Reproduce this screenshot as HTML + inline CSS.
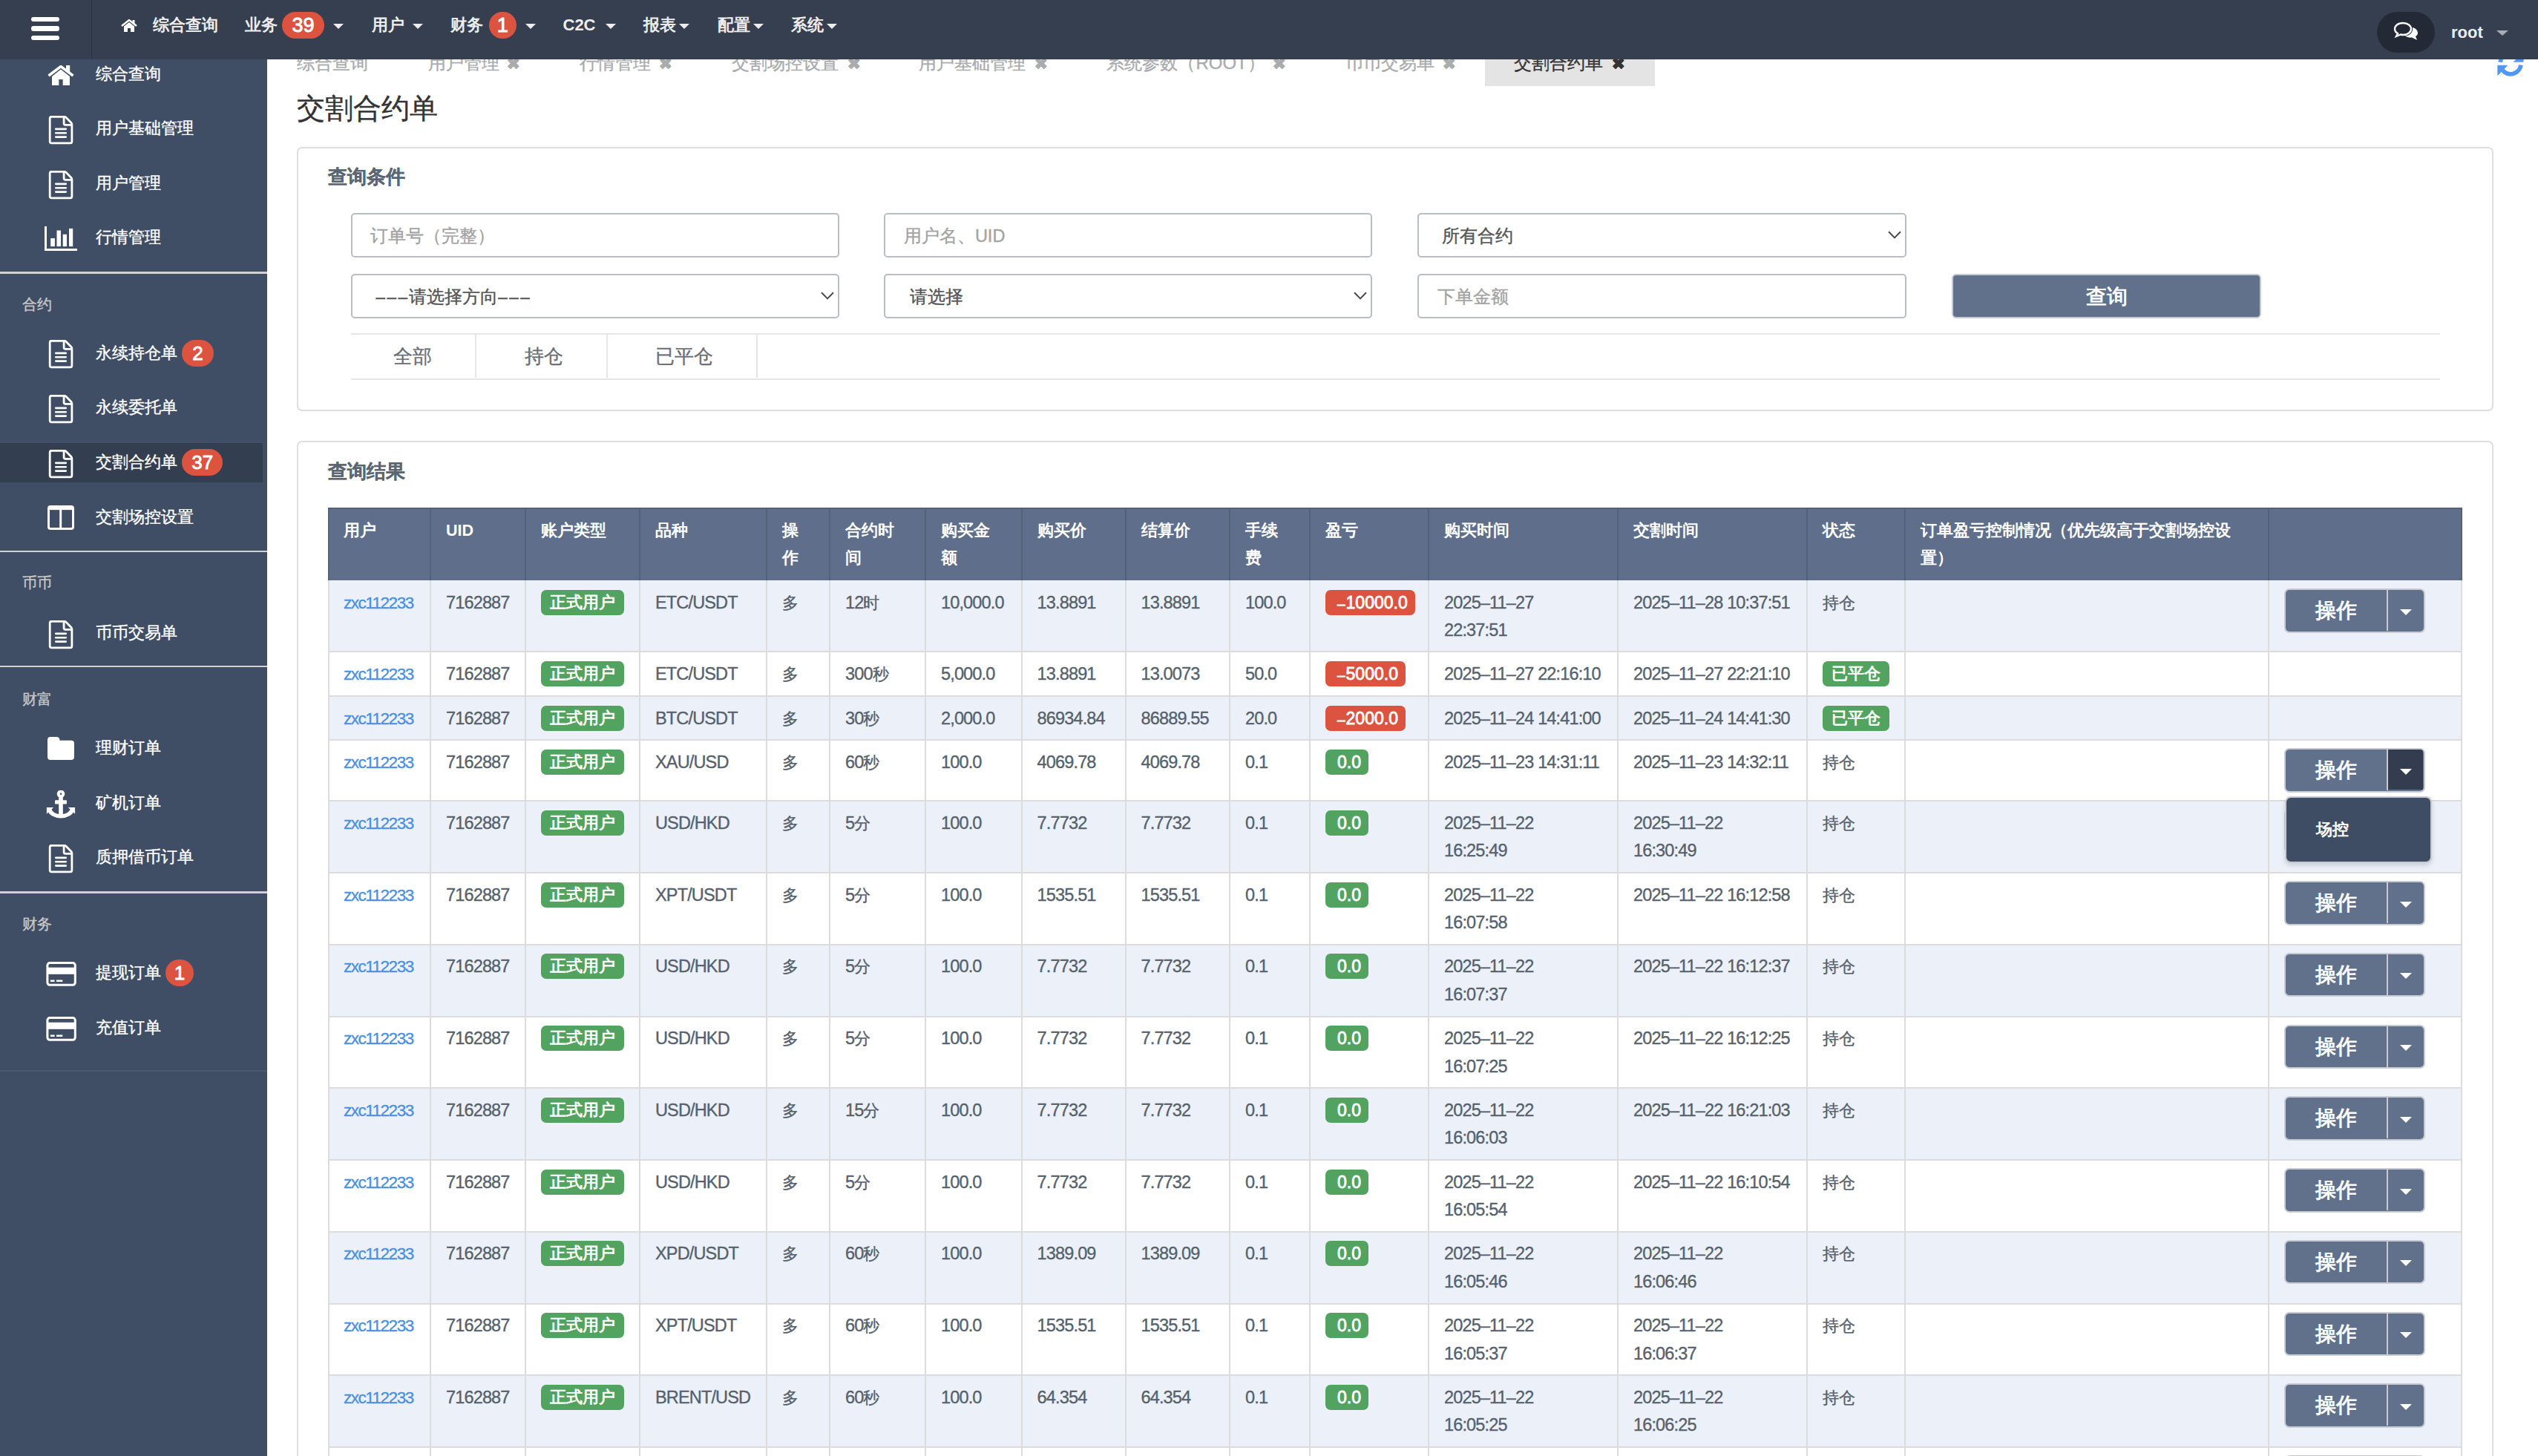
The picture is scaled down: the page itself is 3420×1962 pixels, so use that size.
<!DOCTYPE html><html><head><meta charset="utf-8"><title>交割合约单</title><style>
@media (max-width:2400px){html{zoom:0.5}}
*{box-sizing:border-box;margin:0;padding:0}
html,body{width:3420px;height:1962px;overflow:hidden;background:#fff;font-family:"Liberation Sans",sans-serif;color:#555;-webkit-text-stroke:0.35px currentColor}
div,span,i{position:absolute}
.t{white-space:nowrap}
#top{left:0;top:0;width:3420px;height:80px;background:#353f50;z-index:10}
#side{left:0;top:80px;width:360px;height:1882px;background:#3f4e65;z-index:5}
.bar{left:42px;width:38px;height:6.5px;border-radius:3.25px;background:#fff}
.nav{font-size:22px;font-weight:bold;color:#ededed;white-space:nowrap;line-height:30px;-webkit-text-stroke:0}
.car{width:0;height:0;border-left:7.75px solid transparent;border-right:7.75px solid transparent;border-top:7.5px solid #ededed}
.nb{height:35.5px;border-radius:17.75px;background:#dc5340;color:#fff;font-weight:normal;-webkit-text-stroke:0.9px #fff;font-size:27px;line-height:36px;text-align:center}
.si{font-size:22px;color:#fff;white-space:nowrap;line-height:30px}
.sl{font-size:20px;color:#c8c8c8;white-space:nowrap;line-height:30px}
.sdiv{left:0;width:360px;height:2.5px;background:#d5d0ce}
.sb{height:36px;border-radius:18px;background:#dc5340;color:#fff;font-weight:normal;-webkit-text-stroke:0.9px #fff;font-size:26px;line-height:36px;text-align:center}
.tab{font-size:24px;color:#a9abad;white-space:nowrap;line-height:30px}
.box{border:2px solid #dedede;border-radius:7px;background:#fff}
.inp{height:59.5px;border:2px solid #b9bdc4;border-radius:5px;background:#fff;font-size:23.5px;white-space:nowrap}
.inp span{top:1.5px;line-height:55.5px}
.ph{color:#a3a3a3}
.chev{width:10px;height:10px;border-right:2.5px solid #444;border-bottom:2.5px solid #444;transform:rotate(45deg)}
.ft{font-size:26px;color:#6b6e74;white-space:nowrap;line-height:30px}
.cell{white-space:nowrap;font-size:23.5px;letter-spacing:-0.85px;line-height:37.5px;color:#56616c}
em{font-style:normal;font-size:21.5px;letter-spacing:0}
.hd{white-space:nowrap;font-size:21.5px;line-height:36.5px;color:#fff;font-weight:bold;-webkit-text-stroke:0}
.lnk{color:#4a90e2;letter-spacing:-1.5px;font-size:22.5px}
.bg{-webkit-text-stroke:0.8px #fff;height:34px;border-radius:7px;background:#52a35f;color:#fff;font-weight:normal;font-size:23px;line-height:34px;text-align:center;white-space:nowrap}
.br{background:#dc5340}
small.dsh{font-size:19px;margin-right:1px}
b.dd{font-weight:normal;font-size:22.5px;letter-spacing:2.4px}
.btn{width:190px;height:59.5px;border:2.5px solid #c7cbd1;border-radius:7px;background:#62718b;overflow:hidden}
.btn .m{left:0;top:0;width:136px;height:55px;color:#fff;font-size:28px;line-height:55px;text-align:center;-webkit-text-stroke:0.9px #fff}
.btn .s{left:136px;top:0;width:2px;height:55px;background:#c7cbd1}
.btn .tg{left:138px;top:0;width:47px;height:54px}
.btn .tg i{left:15.5px;top:25.5px;width:0;height:0;border-left:8px solid transparent;border-right:8px solid transparent;border-top:8.5px solid #fff}
</style></head><body>
<div style="left:2000.7px;top:40px;width:229.5px;height:75.5px;background:#e4e4e4"></div>
<div class="tab" style="left:400px;top:70px">综合查询</div>
<div class="tab" style="left:576.5px;top:70px">用户管理</div>
<div class="tab" style="left:683px;top:71px;font-weight:bold;font-size:21px">✖</div>
<div class="tab" style="left:780.7px;top:70px">行情管理</div>
<div class="tab" style="left:888px;top:71px;font-weight:bold;font-size:21px">✖</div>
<div class="tab" style="left:986px;top:70px">交割场控设置</div>
<div class="tab" style="left:1141.6px;top:71px;font-weight:bold;font-size:21px">✖</div>
<div class="tab" style="left:1237.5px;top:70px">用户基础管理</div>
<div class="tab" style="left:1394px;top:71px;font-weight:bold;font-size:21px">✖</div>
<div class="tab" style="left:1491.4px;top:70px">系统参数（ROOT）</div>
<div class="tab" style="left:1714.7px;top:71px;font-weight:bold;font-size:21px">✖</div>
<div class="tab" style="left:1813px;top:70px">币币交易单</div>
<div class="tab" style="left:1944px;top:71px;font-weight:bold;font-size:21px">✖</div>
<div class="tab" style="left:2040px;top:70px;color:#333">交割合约单</div>
<div class="tab" style="left:2172px;top:71px;color:#333;font-weight:bold;font-size:21px">✖</div>
<svg style="position:absolute;left:3340px;top:60px" width="80" height="60" viewBox="0 0 80 60"><path d="M56.9 27.65 A14 14 0 0 1 32.28 34.7" fill="none" stroke="#5196f4" stroke-width="5.8"/><path d="M25.8 28.2 H38.6 L25.8 41.2 Z" fill="#5196f4" stroke="#5196f4" stroke-width="0.8" stroke-linejoin="round"/><path d="M29.14 23.75 A14 14 0 0 1 53.72 16.7" fill="none" stroke="#5196f4" stroke-width="5.8"/><path d="M60.2 23.2 H47.4 L60.2 10.2 Z" fill="#5196f4" stroke="#5196f4" stroke-width="0.8" stroke-linejoin="round"/></svg>
<div class="t" style="left:400px;top:119px;font-size:38px;color:#333;line-height:54px">交割合约单</div>
<div class="box" style="left:400px;top:198px;width:2960px;height:356px"></div>
<div class="t" style="left:442px;top:223px;font-size:26px;font-weight:bold;color:#5b6670;line-height:30px;-webkit-text-stroke:0.2px #5b6670">查询条件</div>
<div class="inp" style="left:472.6px;top:287px;width:658px"><span class="ph" style="left:24.5px;color:#a3a3a3">订单号（完整）</span></div>
<div class="inp" style="left:1191.4px;top:287px;width:658px"><span class="ph" style="left:24.5px;color:#a3a3a3">用户名、UID</span></div>
<div class="inp" style="left:1910px;top:287px;width:659px"><span class="" style="left:30.6px;color:#555">所有合约</span><svg style="position:absolute;left:632px;top:22px" width="18" height="11" viewBox="0 0 18 11"><path d="M1 1.2 L9 9.4 L17 1.2" fill="none" stroke="#4a4a4a" stroke-width="2"/></svg></div>
<div class="inp" style="left:472.6px;top:369px;width:658px"><span class="" style="left:32px;color:#555"><b class="dd">–––</b>请选择方向<b class="dd">–––</b></span><svg style="position:absolute;left:631px;top:22px" width="18" height="11" viewBox="0 0 18 11"><path d="M1 1.2 L9 9.4 L17 1.2" fill="none" stroke="#4a4a4a" stroke-width="2"/></svg></div>
<div class="inp" style="left:1191.4px;top:369px;width:658px"><span class="" style="left:32.6px;color:#555">请选择</span><svg style="position:absolute;left:631px;top:22px" width="18" height="11" viewBox="0 0 18 11"><path d="M1 1.2 L9 9.4 L17 1.2" fill="none" stroke="#4a4a4a" stroke-width="2"/></svg></div>
<div class="inp" style="left:1910px;top:369px;width:659px"><span class="ph" style="left:25px;color:#a3a3a3">下单金额</span></div>
<div style="left:2630px;top:369px;width:417px;height:59.5px;background:#62718b;border:2px solid #c7cbd1;border-radius:6px;color:#fff;font-size:28px;line-height:57px;text-align:center;-webkit-text-stroke:0.8px #fff">查询</div>
<div style="left:472.6px;top:449px;width:2815.4px;height:2px;background:#e6e6e6"></div>
<div style="left:472.6px;top:509.5px;width:2815.4px;height:2px;background:#e6e6e6"></div>
<div style="left:640px;top:450px;width:2px;height:59px;background:#e6e6e6"></div>
<div style="left:817px;top:450px;width:2px;height:59px;background:#e6e6e6"></div>
<div style="left:1018.7px;top:450px;width:2px;height:59px;background:#e6e6e6"></div>
<div class="ft" style="left:530.0px;top:465px;width:52px">全部</div>
<div class="ft" style="left:707.0px;top:465px;width:52px">持仓</div>
<div class="ft" style="left:882.7px;top:465px;width:78px">已平仓</div>
<div class="box" style="left:400px;top:594px;width:2960px;height:1500px"></div>
<div class="t" style="left:442px;top:620px;font-size:26px;font-weight:bold;color:#5b6670;line-height:30px;-webkit-text-stroke:0.2px #5b6670">查询结果</div>
<div style="left:443px;top:685px;width:2874px;height:97px;background:#5f6f8b"></div>
<div style="left:443px;top:782px;width:2874px;height:96px;background:#ecf1f9"></div>
<div style="left:443px;top:878px;width:2874px;height:60px;background:#ffffff"></div>
<div style="left:443px;top:938px;width:2874px;height:59px;background:#ecf1f9"></div>
<div style="left:443px;top:997px;width:2874px;height:82px;background:#ffffff"></div>
<div style="left:443px;top:1079px;width:2874px;height:97px;background:#ecf1f9"></div>
<div style="left:443px;top:1176px;width:2874px;height:96.75px;background:#ffffff"></div>
<div style="left:443px;top:1272.75px;width:2874px;height:96.75px;background:#ecf1f9"></div>
<div style="left:443px;top:1369.5px;width:2874px;height:96.75px;background:#ffffff"></div>
<div style="left:443px;top:1466.25px;width:2874px;height:96.75px;background:#ecf1f9"></div>
<div style="left:443px;top:1563px;width:2874px;height:96.75px;background:#ffffff"></div>
<div style="left:443px;top:1659.75px;width:2874px;height:96.75px;background:#ecf1f9"></div>
<div style="left:443px;top:1756.5px;width:2874px;height:96.75px;background:#ffffff"></div>
<div style="left:443px;top:1853.25px;width:2874px;height:96.75px;background:#ecf1f9"></div>
<div style="left:443px;top:1950px;width:2874px;height:96.75px;background:#ffffff"></div>
<div style="left:442px;top:685px;width:2px;height:97px;background:#53627b"></div>
<div style="left:442px;top:782px;width:2px;height:1263px;background:#dcdcdc"></div>
<div style="left:579px;top:685px;width:2px;height:97px;background:#53627b"></div>
<div style="left:579px;top:782px;width:2px;height:1263px;background:#dcdcdc"></div>
<div style="left:707px;top:685px;width:2px;height:97px;background:#53627b"></div>
<div style="left:707px;top:782px;width:2px;height:1263px;background:#dcdcdc"></div>
<div style="left:861px;top:685px;width:2px;height:97px;background:#53627b"></div>
<div style="left:861px;top:782px;width:2px;height:1263px;background:#dcdcdc"></div>
<div style="left:1032px;top:685px;width:2px;height:97px;background:#53627b"></div>
<div style="left:1032px;top:782px;width:2px;height:1263px;background:#dcdcdc"></div>
<div style="left:1117px;top:685px;width:2px;height:97px;background:#53627b"></div>
<div style="left:1117px;top:782px;width:2px;height:1263px;background:#dcdcdc"></div>
<div style="left:1246px;top:685px;width:2px;height:97px;background:#53627b"></div>
<div style="left:1246px;top:782px;width:2px;height:1263px;background:#dcdcdc"></div>
<div style="left:1375.6px;top:685px;width:2px;height:97px;background:#53627b"></div>
<div style="left:1375.6px;top:782px;width:2px;height:1263px;background:#dcdcdc"></div>
<div style="left:1515.5px;top:685px;width:2px;height:97px;background:#53627b"></div>
<div style="left:1515.5px;top:782px;width:2px;height:1263px;background:#dcdcdc"></div>
<div style="left:1656px;top:685px;width:2px;height:97px;background:#53627b"></div>
<div style="left:1656px;top:782px;width:2px;height:1263px;background:#dcdcdc"></div>
<div style="left:1764px;top:685px;width:2px;height:97px;background:#53627b"></div>
<div style="left:1764px;top:782px;width:2px;height:1263px;background:#dcdcdc"></div>
<div style="left:1924px;top:685px;width:2px;height:97px;background:#53627b"></div>
<div style="left:1924px;top:782px;width:2px;height:1263px;background:#dcdcdc"></div>
<div style="left:2179px;top:685px;width:2px;height:97px;background:#53627b"></div>
<div style="left:2179px;top:782px;width:2px;height:1263px;background:#dcdcdc"></div>
<div style="left:2434px;top:685px;width:2px;height:97px;background:#53627b"></div>
<div style="left:2434px;top:782px;width:2px;height:1263px;background:#dcdcdc"></div>
<div style="left:2566px;top:685px;width:2px;height:97px;background:#53627b"></div>
<div style="left:2566px;top:782px;width:2px;height:1263px;background:#dcdcdc"></div>
<div style="left:3056px;top:685px;width:2px;height:97px;background:#53627b"></div>
<div style="left:3056px;top:782px;width:2px;height:1263px;background:#dcdcdc"></div>
<div style="left:3316px;top:685px;width:2px;height:97px;background:#53627b"></div>
<div style="left:3316px;top:782px;width:2px;height:1263px;background:#dcdcdc"></div>
<div style="left:442px;top:684px;width:2876px;height:2px;background:#53627b"></div>
<div style="left:442px;top:877px;width:2876px;height:2px;background:#dcdcdc"></div>
<div style="left:442px;top:937px;width:2876px;height:2px;background:#dcdcdc"></div>
<div style="left:442px;top:996px;width:2876px;height:2px;background:#dcdcdc"></div>
<div style="left:442px;top:1078px;width:2876px;height:2px;background:#dcdcdc"></div>
<div style="left:442px;top:1175px;width:2876px;height:2px;background:#dcdcdc"></div>
<div style="left:442px;top:1271.75px;width:2876px;height:2px;background:#dcdcdc"></div>
<div style="left:442px;top:1368.5px;width:2876px;height:2px;background:#dcdcdc"></div>
<div style="left:442px;top:1465.25px;width:2876px;height:2px;background:#dcdcdc"></div>
<div style="left:442px;top:1562px;width:2876px;height:2px;background:#dcdcdc"></div>
<div style="left:442px;top:1658.75px;width:2876px;height:2px;background:#dcdcdc"></div>
<div style="left:442px;top:1755.5px;width:2876px;height:2px;background:#dcdcdc"></div>
<div style="left:442px;top:1852.25px;width:2876px;height:2px;background:#dcdcdc"></div>
<div style="left:442px;top:1949px;width:2876px;height:2px;background:#dcdcdc"></div>
<div style="left:442px;top:2045.75px;width:2876px;height:2px;background:#dcdcdc"></div>
<div class="hd" style="left:463px;top:697px">用户</div>
<div class="hd" style="left:601px;top:697px">UID</div>
<div class="hd" style="left:729px;top:697px">账户类型</div>
<div class="hd" style="left:883px;top:697px">品种</div>
<div class="hd" style="left:1054px;top:697px">操<br>作</div>
<div class="hd" style="left:1139px;top:697px">合约时<br>间</div>
<div class="hd" style="left:1268px;top:697px">购买金<br>额</div>
<div class="hd" style="left:1397.6px;top:697px">购买价</div>
<div class="hd" style="left:1537.5px;top:697px">结算价</div>
<div class="hd" style="left:1678px;top:697px">手续<br>费</div>
<div class="hd" style="left:1786px;top:697px">盈亏</div>
<div class="hd" style="left:1946px;top:697px">购买时间</div>
<div class="hd" style="left:2201px;top:697px">交割时间</div>
<div class="hd" style="left:2456px;top:697px">状态</div>
<div class="hd" style="left:2588px;top:697px">订单盈亏控制情况（优先级高于交割场控设<br>置）</div>
<div class="hd" style="left:3078px;top:697px"></div>
<div class="cell lnk" style="left:463px;top:793.5px">zxc112233</div>
<div class="cell" style="left:601px;top:793.5px">7162887</div>
<div class="bg" style="left:729px;top:794.5px;padding:0 12px;font-size:21.7px">正式用户</div>
<div class="cell" style="left:883px;top:793.5px">ETC/USDT</div>
<div class="cell" style="left:1054px;top:793.5px"><em>多</em></div>
<div class="cell" style="left:1139px;top:793.5px">12<em>时</em></div>
<div class="cell" style="left:1268px;top:793.5px">10,000.0</div>
<div class="cell" style="left:1397.6px;top:793.5px">13.8891</div>
<div class="cell" style="left:1537.5px;top:793.5px">13.8891</div>
<div class="cell" style="left:1678px;top:793.5px">100.0</div>
<div class="bg br" style="left:1786px;top:794.5px;padding:0 10px 0 16px;letter-spacing:0"><small class="dsh">–</small>10000.0</div>
<div class="cell" style="left:1946px;top:793.5px">2025–11–27<br>22:37:51</div>
<div class="cell" style="left:2201px;top:793.5px">2025–11–28 10:37:51</div>
<div class="cell" style="left:2456px;top:793.5px"><em>持仓</em></div>
<div class="btn" style="left:3078px;top:793px"><div class="m">操作</div><div class="s"></div><div class="tg"><i></i></div></div>
<div class="cell lnk" style="left:463px;top:889.5px">zxc112233</div>
<div class="cell" style="left:601px;top:889.5px">7162887</div>
<div class="bg" style="left:729px;top:890.5px;padding:0 12px;font-size:21.7px">正式用户</div>
<div class="cell" style="left:883px;top:889.5px">ETC/USDT</div>
<div class="cell" style="left:1054px;top:889.5px"><em>多</em></div>
<div class="cell" style="left:1139px;top:889.5px">300<em>秒</em></div>
<div class="cell" style="left:1268px;top:889.5px">5,000.0</div>
<div class="cell" style="left:1397.6px;top:889.5px">13.8891</div>
<div class="cell" style="left:1537.5px;top:889.5px">13.0073</div>
<div class="cell" style="left:1678px;top:889.5px">50.0</div>
<div class="bg br" style="left:1786px;top:890.5px;padding:0 10px 0 16px;letter-spacing:0"><small class="dsh">–</small>5000.0</div>
<div class="cell" style="left:1946px;top:889.5px">2025–11–27 22:16:10</div>
<div class="cell" style="left:2201px;top:889.5px">2025–11–27 22:21:10</div>
<div class="bg" style="left:2456px;top:890.5px;padding:0 12px;font-size:21.7px">已平仓</div>
<div class="cell lnk" style="left:463px;top:949.5px">zxc112233</div>
<div class="cell" style="left:601px;top:949.5px">7162887</div>
<div class="bg" style="left:729px;top:950.5px;padding:0 12px;font-size:21.7px">正式用户</div>
<div class="cell" style="left:883px;top:949.5px">BTC/USDT</div>
<div class="cell" style="left:1054px;top:949.5px"><em>多</em></div>
<div class="cell" style="left:1139px;top:949.5px">30<em>秒</em></div>
<div class="cell" style="left:1268px;top:949.5px">2,000.0</div>
<div class="cell" style="left:1397.6px;top:949.5px">86934.84</div>
<div class="cell" style="left:1537.5px;top:949.5px">86889.55</div>
<div class="cell" style="left:1678px;top:949.5px">20.0</div>
<div class="bg br" style="left:1786px;top:950.5px;padding:0 10px 0 16px;letter-spacing:0"><small class="dsh">–</small>2000.0</div>
<div class="cell" style="left:1946px;top:949.5px">2025–11–24 14:41:00</div>
<div class="cell" style="left:2201px;top:949.5px">2025–11–24 14:41:30</div>
<div class="bg" style="left:2456px;top:950.5px;padding:0 12px;font-size:21.7px">已平仓</div>
<div class="cell lnk" style="left:463px;top:1008.5px">zxc112233</div>
<div class="cell" style="left:601px;top:1008.5px">7162887</div>
<div class="bg" style="left:729px;top:1009.5px;padding:0 12px;font-size:21.7px">正式用户</div>
<div class="cell" style="left:883px;top:1008.5px">XAU/USD</div>
<div class="cell" style="left:1054px;top:1008.5px"><em>多</em></div>
<div class="cell" style="left:1139px;top:1008.5px">60<em>秒</em></div>
<div class="cell" style="left:1268px;top:1008.5px">100.0</div>
<div class="cell" style="left:1397.6px;top:1008.5px">4069.78</div>
<div class="cell" style="left:1537.5px;top:1008.5px">4069.78</div>
<div class="cell" style="left:1678px;top:1008.5px">0.1</div>
<div class="bg" style="left:1786px;top:1009.5px;padding:0 10px 0 16px;letter-spacing:0">0.0</div>
<div class="cell" style="left:1946px;top:1008.5px">2025–11–23 14:31:11</div>
<div class="cell" style="left:2201px;top:1008.5px">2025–11–23 14:32:11</div>
<div class="cell" style="left:2456px;top:1008.5px"><em>持仓</em></div>
<div class="btn" style="left:3078px;top:1008px"><div class="m">操作</div><div class="s"></div><div class="tg" style="background:#333d4f"><i></i></div></div>
<div class="cell lnk" style="left:463px;top:1090.5px">zxc112233</div>
<div class="cell" style="left:601px;top:1090.5px">7162887</div>
<div class="bg" style="left:729px;top:1091.5px;padding:0 12px;font-size:21.7px">正式用户</div>
<div class="cell" style="left:883px;top:1090.5px">USD/HKD</div>
<div class="cell" style="left:1054px;top:1090.5px"><em>多</em></div>
<div class="cell" style="left:1139px;top:1090.5px">5<em>分</em></div>
<div class="cell" style="left:1268px;top:1090.5px">100.0</div>
<div class="cell" style="left:1397.6px;top:1090.5px">7.7732</div>
<div class="cell" style="left:1537.5px;top:1090.5px">7.7732</div>
<div class="cell" style="left:1678px;top:1090.5px">0.1</div>
<div class="bg" style="left:1786px;top:1091.5px;padding:0 10px 0 16px;letter-spacing:0">0.0</div>
<div class="cell" style="left:1946px;top:1090.5px">2025–11–22<br>16:25:49</div>
<div class="cell" style="left:2201px;top:1090.5px">2025–11–22<br>16:30:49</div>
<div class="cell" style="left:2456px;top:1090.5px"><em>持仓</em></div>
<div class="btn" style="left:3078px;top:1090px"><div class="m">操作</div><div class="s"></div><div class="tg"><i></i></div></div>
<div style="left:3079px;top:1073px;width:197.5px;height:89.5px;background:#3f4d64;border:2px solid #c7cbd1;border-radius:8px;box-shadow:0 3px 6px rgba(0,0,0,.15);z-index:3"><div class="t" style="left:40px;top:28px;font-size:21.5px;color:#fff;line-height:30px;-webkit-text-stroke:0.8px #fff">场控</div></div>
<div class="cell lnk" style="left:463px;top:1187.5px">zxc112233</div>
<div class="cell" style="left:601px;top:1187.5px">7162887</div>
<div class="bg" style="left:729px;top:1188.5px;padding:0 12px;font-size:21.7px">正式用户</div>
<div class="cell" style="left:883px;top:1187.5px">XPT/USDT</div>
<div class="cell" style="left:1054px;top:1187.5px"><em>多</em></div>
<div class="cell" style="left:1139px;top:1187.5px">5<em>分</em></div>
<div class="cell" style="left:1268px;top:1187.5px">100.0</div>
<div class="cell" style="left:1397.6px;top:1187.5px">1535.51</div>
<div class="cell" style="left:1537.5px;top:1187.5px">1535.51</div>
<div class="cell" style="left:1678px;top:1187.5px">0.1</div>
<div class="bg" style="left:1786px;top:1188.5px;padding:0 10px 0 16px;letter-spacing:0">0.0</div>
<div class="cell" style="left:1946px;top:1187.5px">2025–11–22<br>16:07:58</div>
<div class="cell" style="left:2201px;top:1187.5px">2025–11–22 16:12:58</div>
<div class="cell" style="left:2456px;top:1187.5px"><em>持仓</em></div>
<div class="btn" style="left:3078px;top:1187px"><div class="m">操作</div><div class="s"></div><div class="tg"><i></i></div></div>
<div class="cell lnk" style="left:463px;top:1284.25px">zxc112233</div>
<div class="cell" style="left:601px;top:1284.25px">7162887</div>
<div class="bg" style="left:729px;top:1285.25px;padding:0 12px;font-size:21.7px">正式用户</div>
<div class="cell" style="left:883px;top:1284.25px">USD/HKD</div>
<div class="cell" style="left:1054px;top:1284.25px"><em>多</em></div>
<div class="cell" style="left:1139px;top:1284.25px">5<em>分</em></div>
<div class="cell" style="left:1268px;top:1284.25px">100.0</div>
<div class="cell" style="left:1397.6px;top:1284.25px">7.7732</div>
<div class="cell" style="left:1537.5px;top:1284.25px">7.7732</div>
<div class="cell" style="left:1678px;top:1284.25px">0.1</div>
<div class="bg" style="left:1786px;top:1285.25px;padding:0 10px 0 16px;letter-spacing:0">0.0</div>
<div class="cell" style="left:1946px;top:1284.25px">2025–11–22<br>16:07:37</div>
<div class="cell" style="left:2201px;top:1284.25px">2025–11–22 16:12:37</div>
<div class="cell" style="left:2456px;top:1284.25px"><em>持仓</em></div>
<div class="btn" style="left:3078px;top:1283.75px"><div class="m">操作</div><div class="s"></div><div class="tg"><i></i></div></div>
<div class="cell lnk" style="left:463px;top:1381.0px">zxc112233</div>
<div class="cell" style="left:601px;top:1381.0px">7162887</div>
<div class="bg" style="left:729px;top:1382.0px;padding:0 12px;font-size:21.7px">正式用户</div>
<div class="cell" style="left:883px;top:1381.0px">USD/HKD</div>
<div class="cell" style="left:1054px;top:1381.0px"><em>多</em></div>
<div class="cell" style="left:1139px;top:1381.0px">5<em>分</em></div>
<div class="cell" style="left:1268px;top:1381.0px">100.0</div>
<div class="cell" style="left:1397.6px;top:1381.0px">7.7732</div>
<div class="cell" style="left:1537.5px;top:1381.0px">7.7732</div>
<div class="cell" style="left:1678px;top:1381.0px">0.1</div>
<div class="bg" style="left:1786px;top:1382.0px;padding:0 10px 0 16px;letter-spacing:0">0.0</div>
<div class="cell" style="left:1946px;top:1381.0px">2025–11–22<br>16:07:25</div>
<div class="cell" style="left:2201px;top:1381.0px">2025–11–22 16:12:25</div>
<div class="cell" style="left:2456px;top:1381.0px"><em>持仓</em></div>
<div class="btn" style="left:3078px;top:1380.5px"><div class="m">操作</div><div class="s"></div><div class="tg"><i></i></div></div>
<div class="cell lnk" style="left:463px;top:1477.75px">zxc112233</div>
<div class="cell" style="left:601px;top:1477.75px">7162887</div>
<div class="bg" style="left:729px;top:1478.75px;padding:0 12px;font-size:21.7px">正式用户</div>
<div class="cell" style="left:883px;top:1477.75px">USD/HKD</div>
<div class="cell" style="left:1054px;top:1477.75px"><em>多</em></div>
<div class="cell" style="left:1139px;top:1477.75px">15<em>分</em></div>
<div class="cell" style="left:1268px;top:1477.75px">100.0</div>
<div class="cell" style="left:1397.6px;top:1477.75px">7.7732</div>
<div class="cell" style="left:1537.5px;top:1477.75px">7.7732</div>
<div class="cell" style="left:1678px;top:1477.75px">0.1</div>
<div class="bg" style="left:1786px;top:1478.75px;padding:0 10px 0 16px;letter-spacing:0">0.0</div>
<div class="cell" style="left:1946px;top:1477.75px">2025–11–22<br>16:06:03</div>
<div class="cell" style="left:2201px;top:1477.75px">2025–11–22 16:21:03</div>
<div class="cell" style="left:2456px;top:1477.75px"><em>持仓</em></div>
<div class="btn" style="left:3078px;top:1477.25px"><div class="m">操作</div><div class="s"></div><div class="tg"><i></i></div></div>
<div class="cell lnk" style="left:463px;top:1574.5px">zxc112233</div>
<div class="cell" style="left:601px;top:1574.5px">7162887</div>
<div class="bg" style="left:729px;top:1575.5px;padding:0 12px;font-size:21.7px">正式用户</div>
<div class="cell" style="left:883px;top:1574.5px">USD/HKD</div>
<div class="cell" style="left:1054px;top:1574.5px"><em>多</em></div>
<div class="cell" style="left:1139px;top:1574.5px">5<em>分</em></div>
<div class="cell" style="left:1268px;top:1574.5px">100.0</div>
<div class="cell" style="left:1397.6px;top:1574.5px">7.7732</div>
<div class="cell" style="left:1537.5px;top:1574.5px">7.7732</div>
<div class="cell" style="left:1678px;top:1574.5px">0.1</div>
<div class="bg" style="left:1786px;top:1575.5px;padding:0 10px 0 16px;letter-spacing:0">0.0</div>
<div class="cell" style="left:1946px;top:1574.5px">2025–11–22<br>16:05:54</div>
<div class="cell" style="left:2201px;top:1574.5px">2025–11–22 16:10:54</div>
<div class="cell" style="left:2456px;top:1574.5px"><em>持仓</em></div>
<div class="btn" style="left:3078px;top:1574px"><div class="m">操作</div><div class="s"></div><div class="tg"><i></i></div></div>
<div class="cell lnk" style="left:463px;top:1671.25px">zxc112233</div>
<div class="cell" style="left:601px;top:1671.25px">7162887</div>
<div class="bg" style="left:729px;top:1672.25px;padding:0 12px;font-size:21.7px">正式用户</div>
<div class="cell" style="left:883px;top:1671.25px">XPD/USDT</div>
<div class="cell" style="left:1054px;top:1671.25px"><em>多</em></div>
<div class="cell" style="left:1139px;top:1671.25px">60<em>秒</em></div>
<div class="cell" style="left:1268px;top:1671.25px">100.0</div>
<div class="cell" style="left:1397.6px;top:1671.25px">1389.09</div>
<div class="cell" style="left:1537.5px;top:1671.25px">1389.09</div>
<div class="cell" style="left:1678px;top:1671.25px">0.1</div>
<div class="bg" style="left:1786px;top:1672.25px;padding:0 10px 0 16px;letter-spacing:0">0.0</div>
<div class="cell" style="left:1946px;top:1671.25px">2025–11–22<br>16:05:46</div>
<div class="cell" style="left:2201px;top:1671.25px">2025–11–22<br>16:06:46</div>
<div class="cell" style="left:2456px;top:1671.25px"><em>持仓</em></div>
<div class="btn" style="left:3078px;top:1670.75px"><div class="m">操作</div><div class="s"></div><div class="tg"><i></i></div></div>
<div class="cell lnk" style="left:463px;top:1768.0px">zxc112233</div>
<div class="cell" style="left:601px;top:1768.0px">7162887</div>
<div class="bg" style="left:729px;top:1769.0px;padding:0 12px;font-size:21.7px">正式用户</div>
<div class="cell" style="left:883px;top:1768.0px">XPT/USDT</div>
<div class="cell" style="left:1054px;top:1768.0px"><em>多</em></div>
<div class="cell" style="left:1139px;top:1768.0px">60<em>秒</em></div>
<div class="cell" style="left:1268px;top:1768.0px">100.0</div>
<div class="cell" style="left:1397.6px;top:1768.0px">1535.51</div>
<div class="cell" style="left:1537.5px;top:1768.0px">1535.51</div>
<div class="cell" style="left:1678px;top:1768.0px">0.1</div>
<div class="bg" style="left:1786px;top:1769.0px;padding:0 10px 0 16px;letter-spacing:0">0.0</div>
<div class="cell" style="left:1946px;top:1768.0px">2025–11–22<br>16:05:37</div>
<div class="cell" style="left:2201px;top:1768.0px">2025–11–22<br>16:06:37</div>
<div class="cell" style="left:2456px;top:1768.0px"><em>持仓</em></div>
<div class="btn" style="left:3078px;top:1767.5px"><div class="m">操作</div><div class="s"></div><div class="tg"><i></i></div></div>
<div class="cell lnk" style="left:463px;top:1864.75px">zxc112233</div>
<div class="cell" style="left:601px;top:1864.75px">7162887</div>
<div class="bg" style="left:729px;top:1865.75px;padding:0 12px;font-size:21.7px">正式用户</div>
<div class="cell" style="left:883px;top:1864.75px">BRENT/USD</div>
<div class="cell" style="left:1054px;top:1864.75px"><em>多</em></div>
<div class="cell" style="left:1139px;top:1864.75px">60<em>秒</em></div>
<div class="cell" style="left:1268px;top:1864.75px">100.0</div>
<div class="cell" style="left:1397.6px;top:1864.75px">64.354</div>
<div class="cell" style="left:1537.5px;top:1864.75px">64.354</div>
<div class="cell" style="left:1678px;top:1864.75px">0.1</div>
<div class="bg" style="left:1786px;top:1865.75px;padding:0 10px 0 16px;letter-spacing:0">0.0</div>
<div class="cell" style="left:1946px;top:1864.75px">2025–11–22<br>16:05:25</div>
<div class="cell" style="left:2201px;top:1864.75px">2025–11–22<br>16:06:25</div>
<div class="cell" style="left:2456px;top:1864.75px"><em>持仓</em></div>
<div class="btn" style="left:3078px;top:1864.25px"><div class="m">操作</div><div class="s"></div><div class="tg"><i></i></div></div>
<div class="cell lnk" style="left:463px;top:1961.5px">zxc112233</div>
<div class="cell" style="left:601px;top:1961.5px">7162887</div>
<div class="bg" style="left:729px;top:1962.5px;padding:0 12px;font-size:21.7px">正式用户</div>
<div class="cell" style="left:883px;top:1961.5px">USD/HKD</div>
<div class="cell" style="left:1054px;top:1961.5px"><em>多</em></div>
<div class="cell" style="left:1139px;top:1961.5px">60<em>秒</em></div>
<div class="cell" style="left:1268px;top:1961.5px">100.0</div>
<div class="cell" style="left:1397.6px;top:1961.5px">64.354</div>
<div class="cell" style="left:1537.5px;top:1961.5px">64.354</div>
<div class="cell" style="left:1678px;top:1961.5px">0.1</div>
<div class="bg" style="left:1786px;top:1962.5px;padding:0 10px 0 16px;letter-spacing:0">0.0</div>
<div class="cell" style="left:1946px;top:1961.5px">2025–11–22<br>16:05:25</div>
<div class="cell" style="left:2201px;top:1961.5px">2025–11–22<br>16:06:25</div>
<div class="cell" style="left:2456px;top:1961.5px"><em>持仓</em></div>
<div class="btn" style="left:3078px;top:1961px"><div class="m">操作</div><div class="s"></div><div class="tg"><i></i></div></div>
<div id="side">
<div style="left:0;top:517.4px;width:354px;height:53px;background:#333e50"></div>
<div class="si" style="left:128.5px;top:5.400000000000006px">综合查询</div>
<svg style="position:absolute;left:64px;top:8px" width="36" height="28" viewBox="0 0 36 28"><path d="M1.5 14 L18 1.5 L34.5 14" fill="none" stroke="#fff" stroke-width="3.5" stroke-linejoin="miter"/><rect x="25" y="0" width="5.2" height="9" fill="#fff"/><path d="M6 15 L18 5.5 L30 15 V27 H20.7 V19 H15.3 V27 H6 Z" fill="#fff"/></svg>
<div class="si" style="left:128.5px;top:78.30000000000001px">用户基础管理</div>
<svg style="position:absolute;left:65px;top:75.80000000000001px" width="34" height="40" viewBox="0 0 34 40"><path d="M2.2 3.5 Q2.2 1.3 4.4 1.3 H21.5 Q23 1.3 24 2.3 L31 9.5 Q31.9 10.5 31.9 12 V34.7 Q31.9 36.9 29.7 36.9 H4.4 Q2.2 36.9 2.2 34.7 Z" fill="none" stroke="#fff" stroke-width="2.8"/><path d="M21.1 1.3 V10.3 Q21.1 12.3 23.1 12.3 H31.9" fill="none" stroke="#fff" stroke-width="2.8"/><path d="M10.25 17.85 H23.75 M10.25 23.25 H23.75 M10.25 28.55 H23.75" stroke="#fff" stroke-width="2.7" stroke-linecap="round"/></svg>
<div class="si" style="left:128.5px;top:152.4px">用户管理</div>
<svg style="position:absolute;left:65px;top:149.9px" width="34" height="40" viewBox="0 0 34 40"><path d="M2.2 3.5 Q2.2 1.3 4.4 1.3 H21.5 Q23 1.3 24 2.3 L31 9.5 Q31.9 10.5 31.9 12 V34.7 Q31.9 36.9 29.7 36.9 H4.4 Q2.2 36.9 2.2 34.7 Z" fill="none" stroke="#fff" stroke-width="2.8"/><path d="M21.1 1.3 V10.3 Q21.1 12.3 23.1 12.3 H31.9" fill="none" stroke="#fff" stroke-width="2.8"/><path d="M10.25 17.85 H23.75 M10.25 23.25 H23.75 M10.25 28.55 H23.75" stroke="#fff" stroke-width="2.7" stroke-linecap="round"/></svg>
<div class="si" style="left:128.5px;top:225.39999999999998px">行情管理</div>
<svg style="position:absolute;left:60px;top:225px" width="44" height="33" viewBox="0 0 44 33"><path d="M1.5 0 V31.5 H44" fill="none" stroke="#fff" stroke-width="3"/><rect x="8.2" y="16.1" width="5.7" height="11" fill="#fff"/><rect x="16.5" y="5.5" width="5.5" height="21.6" fill="#fff"/><rect x="24.7" y="10.8" width="5.3" height="16.3" fill="#fff"/><rect x="33" y="2.9" width="5.2" height="24.2" fill="#fff"/></svg>
<div class="sdiv" style="top:286px"></div>
<div class="sl" style="left:30px;top:315px">合约</div>
<div class="si" style="left:128.5px;top:380.7px">永续持仓单</div>
<svg style="position:absolute;left:65px;top:378.2px" width="34" height="40" viewBox="0 0 34 40"><path d="M2.2 3.5 Q2.2 1.3 4.4 1.3 H21.5 Q23 1.3 24 2.3 L31 9.5 Q31.9 10.5 31.9 12 V34.7 Q31.9 36.9 29.7 36.9 H4.4 Q2.2 36.9 2.2 34.7 Z" fill="none" stroke="#fff" stroke-width="2.8"/><path d="M21.1 1.3 V10.3 Q21.1 12.3 23.1 12.3 H31.9" fill="none" stroke="#fff" stroke-width="2.8"/><path d="M10.25 17.85 H23.75 M10.25 23.25 H23.75 M10.25 28.55 H23.75" stroke="#fff" stroke-width="2.7" stroke-linecap="round"/></svg>
<div class="sb" style="left:245px;top:377.7px;width:43px">2</div>
<div class="si" style="left:128.5px;top:454.29999999999995px">永续委托单</div>
<svg style="position:absolute;left:65px;top:451.79999999999995px" width="34" height="40" viewBox="0 0 34 40"><path d="M2.2 3.5 Q2.2 1.3 4.4 1.3 H21.5 Q23 1.3 24 2.3 L31 9.5 Q31.9 10.5 31.9 12 V34.7 Q31.9 36.9 29.7 36.9 H4.4 Q2.2 36.9 2.2 34.7 Z" fill="none" stroke="#fff" stroke-width="2.8"/><path d="M21.1 1.3 V10.3 Q21.1 12.3 23.1 12.3 H31.9" fill="none" stroke="#fff" stroke-width="2.8"/><path d="M10.25 17.85 H23.75 M10.25 23.25 H23.75 M10.25 28.55 H23.75" stroke="#fff" stroke-width="2.7" stroke-linecap="round"/></svg>
<div class="si" style="left:128.5px;top:528px">交割合约单</div>
<svg style="position:absolute;left:65px;top:525.5px" width="34" height="40" viewBox="0 0 34 40"><path d="M2.2 3.5 Q2.2 1.3 4.4 1.3 H21.5 Q23 1.3 24 2.3 L31 9.5 Q31.9 10.5 31.9 12 V34.7 Q31.9 36.9 29.7 36.9 H4.4 Q2.2 36.9 2.2 34.7 Z" fill="none" stroke="#fff" stroke-width="2.8"/><path d="M21.1 1.3 V10.3 Q21.1 12.3 23.1 12.3 H31.9" fill="none" stroke="#fff" stroke-width="2.8"/><path d="M10.25 17.85 H23.75 M10.25 23.25 H23.75 M10.25 28.55 H23.75" stroke="#fff" stroke-width="2.7" stroke-linecap="round"/></svg>
<div class="sb" style="left:244.9px;top:525px;width:55.5px">37</div>
<div class="si" style="left:128.5px;top:601.5px">交割场控设置</div>
<svg style="position:absolute;left:64px;top:601.0px" width="36" height="33" viewBox="0 0 36 33"><rect x="1.5" y="1.5" width="33" height="30" rx="2.5" fill="none" stroke="#fff" stroke-width="3"/><rect x="1.5" y="1.5" width="33" height="4.6" fill="#fff"/><path d="M17.7 3 V30" stroke="#fff" stroke-width="3"/></svg>
<div class="sdiv" style="top:661.5px"></div>
<div class="sl" style="left:30px;top:690px">币币</div>
<div class="si" style="left:128.5px;top:758px">币币交易单</div>
<svg style="position:absolute;left:65px;top:755.5px" width="34" height="40" viewBox="0 0 34 40"><path d="M2.2 3.5 Q2.2 1.3 4.4 1.3 H21.5 Q23 1.3 24 2.3 L31 9.5 Q31.9 10.5 31.9 12 V34.7 Q31.9 36.9 29.7 36.9 H4.4 Q2.2 36.9 2.2 34.7 Z" fill="none" stroke="#fff" stroke-width="2.8"/><path d="M21.1 1.3 V10.3 Q21.1 12.3 23.1 12.3 H31.9" fill="none" stroke="#fff" stroke-width="2.8"/><path d="M10.25 17.85 H23.75 M10.25 23.25 H23.75 M10.25 28.55 H23.75" stroke="#fff" stroke-width="2.7" stroke-linecap="round"/></svg>
<div class="sdiv" style="top:816.5px"></div>
<div class="sl" style="left:30px;top:847px">财富</div>
<div class="si" style="left:128.5px;top:912.7px">理财订单</div>
<svg style="position:absolute;left:64px;top:912.7px" width="36" height="31" viewBox="0 0 36 31"><path d="M4 0 H12 Q16.5 0 16.5 4.8 H32 Q36 4.8 36 8.8 V27 Q36 31 32 31 H4 Q0 31 0 27 V4 Q0 0 4 0 Z" fill="#fff"/></svg>
<div class="si" style="left:128.5px;top:987px">矿机订单</div>
<svg style="position:absolute;left:62px;top:985px" width="40" height="40" viewBox="0 0 40 40"><circle cx="20" cy="4.8" r="3.3" fill="none" stroke="#fff" stroke-width="4"/><rect x="17.2" y="8" width="5.6" height="25" fill="#fff"/><rect x="12" y="13.2" width="16" height="5.2" rx="1.2" fill="#fff"/><path d="M5 26.5 A15.2 10 0 0 0 35 26.5" fill="none" stroke="#fff" stroke-width="5.4"/><path d="M0.9 23 H10.2 L0.9 31.8 Z M39.1 23 H29.8 L39.1 31.8 Z" fill="#fff"/></svg>
<div class="si" style="left:128.5px;top:1060px">质押借币订单</div>
<svg style="position:absolute;left:65px;top:1057.5px" width="34" height="40" viewBox="0 0 34 40"><path d="M2.2 3.5 Q2.2 1.3 4.4 1.3 H21.5 Q23 1.3 24 2.3 L31 9.5 Q31.9 10.5 31.9 12 V34.7 Q31.9 36.9 29.7 36.9 H4.4 Q2.2 36.9 2.2 34.7 Z" fill="none" stroke="#fff" stroke-width="2.8"/><path d="M21.1 1.3 V10.3 Q21.1 12.3 23.1 12.3 H31.9" fill="none" stroke="#fff" stroke-width="2.8"/><path d="M10.25 17.85 H23.75 M10.25 23.25 H23.75 M10.25 28.55 H23.75" stroke="#fff" stroke-width="2.7" stroke-linecap="round"/></svg>
<div class="sdiv" style="top:1121px"></div>
<div class="sl" style="left:30px;top:1150px">财务</div>
<div class="si" style="left:128.5px;top:1216px">提现订单</div>
<svg style="position:absolute;left:61.5px;top:1216px" width="41" height="33" viewBox="0 0 41 33"><rect x="1.9" y="1.5" width="37.4" height="29.8" rx="3.2" fill="none" stroke="#fff" stroke-width="3"/><rect x="1.9" y="7.7" width="37.4" height="9.1" fill="#fff"/><path d="M5.9 25.8 H11.6 M14 25.8 H22.3" stroke="#fff" stroke-width="2.5"/></svg>
<div class="sb" style="left:223px;top:1213px;width:38px">1</div>
<div class="si" style="left:128.5px;top:1289.7px">充值订单</div>
<svg style="position:absolute;left:61.5px;top:1289.7px" width="41" height="33" viewBox="0 0 41 33"><rect x="1.9" y="1.5" width="37.4" height="29.8" rx="3.2" fill="none" stroke="#fff" stroke-width="3"/><rect x="1.9" y="7.7" width="37.4" height="9.1" fill="#fff"/><path d="M5.9 25.8 H11.6 M14 25.8 H22.3" stroke="#fff" stroke-width="2.5"/></svg>
<div style="left:0;top:1362px;width:360px;height:2px;background:#4d5a6e"></div>
</div>
<div id="top">
<div class="bar" style="top:22.5px"></div><div class="bar" style="top:35px"></div><div class="bar" style="top:47.5px"></div>
<div style="left:122.5px;top:0;width:1.5px;height:80px;background:#2b3442"></div>
<svg style="position:absolute;left:163px;top:26px" width="22" height="17" viewBox="0 0 22 17"><path d="M1 9 L11 1 L21 9" fill="none" stroke="#fff" stroke-width="2.4"/><rect x="15.5" y="1" width="3" height="5" fill="#fff"/><path d="M4 9.5 L11 4 L18 9.5 V17 H13 V12 H9 V17 H4 Z" fill="#fff"/></svg>
<div class="nav" style="left:206.2px;top:19px">综合查询</div>
<div class="nav" style="left:330.0px;top:19px">业务</div>
<div class="nav" style="left:500.5px;top:19px">用户</div>
<div class="nav" style="left:607.1px;top:19px">财务</div>
<div class="nav" style="left:758.5px;top:19px">C2C</div>
<div class="nav" style="left:867.2px;top:19px">报表</div>
<div class="nav" style="left:966.5px;top:19px">配置</div>
<div class="nav" style="left:1065.5px;top:19px">系统</div>
<i class="car" style="left:449px;top:32px"></i>
<i class="car" style="left:555.5px;top:32px"></i>
<i class="car" style="left:708px;top:32px"></i>
<i class="car" style="left:815.6px;top:32px"></i>
<i class="car" style="left:915px;top:32px"></i>
<i class="car" style="left:1015px;top:32px"></i>
<i class="car" style="left:1114px;top:32px"></i>
<div class="nb" style="left:380.4px;top:16px;width:56.2px">39</div>
<div class="nb" style="left:659px;top:16px;width:36.5px">1</div>
<div style="left:3203px;top:16.3px;width:77.6px;height:55.2px;border-radius:28px;background:#232a36"></div>
<svg style="position:absolute;left:3225px;top:29px" width="36" height="27" viewBox="0 0 36 27"><path d="M13 2 C6 2 2 6 2 10 C2 13 4 15 6 16 L4 20 L10 17.5 C11 17.8 12 18 13 18 C20 18 24 14 24 10 C24 6 20 2 13 2 Z" fill="none" stroke="#fff" stroke-width="2.4"/><path d="M26 8 C30 9 33 12 33 15 C33 17 32 19 30 20 L32 25 L25 21.5 C22 22 18 21 16 19.5 C22 19 27 15 26 8 Z" fill="#fff"/></svg>
<div class="nav" style="left:3303px;top:29px">root</div>
<i class="car" style="left:3363.5px;top:40.5px;border-top-color:#a9aeb6;border-left-width:8px;border-right-width:8px"></i>
</div>
</body></html>
